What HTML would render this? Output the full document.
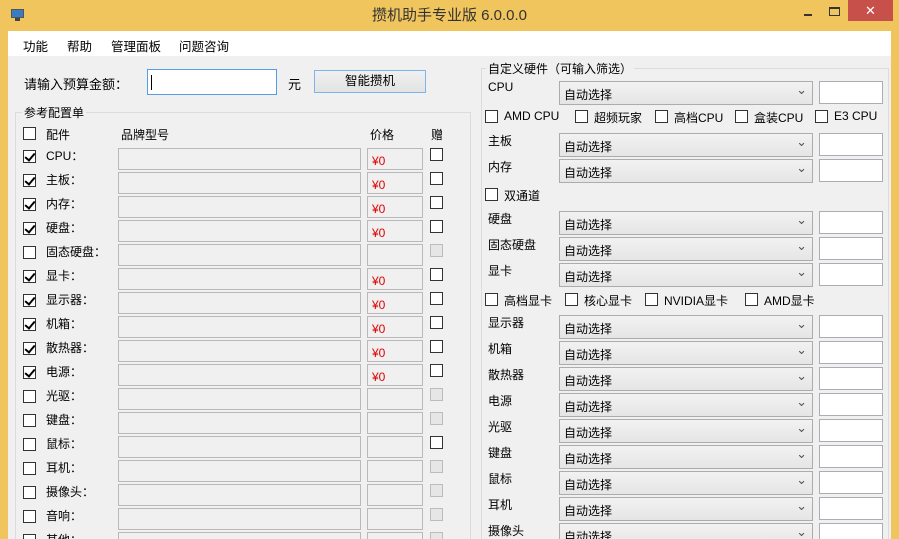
<!DOCTYPE html>
<html><head><meta charset="utf-8"><style>
*{box-sizing:border-box;margin:0;padding:0}
html,body{width:899px;height:539px;overflow:hidden}
body{background:#f0c55e;font-family:"Liberation Sans","Noto Sans CJK SC",sans-serif;font-size:12px;color:#000;position:relative}
.a{position:absolute}
.client{left:8px;top:31px;width:883px;height:508px;background:#f0f0f0}
.menu{left:8px;top:31px;width:883px;height:25px;background:#fff}
.cb{position:absolute;width:13px;height:13px;border:1px solid #333;background:#fff}
.cb.c::after{content:"";position:absolute;left:3px;top:0px;width:4px;height:8px;border:solid #000;border-width:0 2px 2px 0;transform:rotate(40deg)}
.cb.d{border-color:#bcbcbc;background:#e6e6e6}
.tb{position:absolute;border:1px solid #b9b9b9;background:#f0f0f0;height:22px}
.pr{color:#e00000;font-size:12px;padding:5px 0 0 4px}
.cmb{position:absolute;left:559px;width:254px;height:24px;border:1px solid #acacac;background:linear-gradient(#f2f2f2,#e5e5e5);padding:4px 0 0 4px}
.cmb::after{content:"⌄";position:absolute;right:5px;top:0px;font-size:13px;color:#555}
.sb{position:absolute;left:819px;width:64px;height:23px;border:1px solid #abadb3;background:#fff}
.lb{position:absolute}
.clip{position:absolute;left:0;top:0;width:899px;height:539px;overflow:hidden}
</style></head><body><div class="clip">
<div class="a" style="left:11px;top:9px;width:13px;height:9px;background:#3a7cc4;border:1px solid #555"></div>
<div class="a" style="left:15px;top:18px;width:5px;height:3px;background:#444"></div>
<div class="a" style="left:0;top:4px;width:899px;text-align:center;font-size:15px;color:#333">攒机助手专业版 6.0.0.0</div>
<div class="a" style="left:804px;top:14px;width:8px;height:2px;background:#333"></div>
<div class="a" style="left:829px;top:7px;width:11px;height:9px;border:1px solid #333;border-top-width:2px"></div>
<div class="a" style="left:848px;top:0;width:45px;height:21px;background:#c7504b;color:#fff;text-align:center;font-size:13px;line-height:21px">✕</div>
<div class="a client"></div>
<div class="a menu"></div>
<div class="a" style="left:23px;top:36px;font-size:12.5px">功能</div>
<div class="a" style="left:67px;top:36px;font-size:12.5px">帮助</div>
<div class="a" style="left:111px;top:36px;font-size:12.5px">管理面板</div>
<div class="a" style="left:179px;top:36px;font-size:12.5px">问题咨询</div>

<div class="a" style="left:24px;top:74px;font-size:13px">请输入预算金额：</div>
<div class="a" style="left:147px;top:69px;width:130px;height:26px;border:1px solid #569de5;background:#fff"><div class="a" style="left:3px;top:5px;width:1px;height:15px;background:#000"></div></div>
<div class="a" style="left:288px;top:74px;font-size:13px">元</div>
<div class="a" style="left:314px;top:70px;width:112px;height:23px;border:1px solid #7eb4ea;background:linear-gradient(#f0f0f0,#e3e3e3);text-align:center;line-height:21px;font-size:12.5px">智能攒机</div>

<div class="a" style="left:15px;top:112px;width:456px;height:440px;border:1px solid #dcdcdc"></div>
<div class="a" style="left:22px;top:104px;background:#f0f0f0;padding:0 2px">参考配置单</div>
<div class="cb" style="left:23px;top:127px"></div>
<div class="lb" style="left:46px;top:126px">配件</div>
<div class="lb" style="left:121px;top:126px">品牌型号</div>
<div class="lb" style="left:370px;top:126px">价格</div>
<div class="lb" style="left:431px;top:126px">赠</div>

<div class="cb c" style="left:23px;top:150px"></div><div class="lb" style="left:46px;top:147px">CPU：</div><div class="tb" style="left:118px;top:148px;width:243px"></div><div class="tb pr" style="left:367px;top:148px;width:56px">¥0</div><div class="cb" style="left:430px;top:148px"></div>
<div class="cb c" style="left:23px;top:174px"></div><div class="lb" style="left:46px;top:171px">主板：</div><div class="tb" style="left:118px;top:172px;width:243px"></div><div class="tb pr" style="left:367px;top:172px;width:56px">¥0</div><div class="cb" style="left:430px;top:172px"></div>
<div class="cb c" style="left:23px;top:198px"></div><div class="lb" style="left:46px;top:195px">内存：</div><div class="tb" style="left:118px;top:196px;width:243px"></div><div class="tb pr" style="left:367px;top:196px;width:56px">¥0</div><div class="cb" style="left:430px;top:196px"></div>
<div class="cb c" style="left:23px;top:222px"></div><div class="lb" style="left:46px;top:219px">硬盘：</div><div class="tb" style="left:118px;top:220px;width:243px"></div><div class="tb pr" style="left:367px;top:220px;width:56px">¥0</div><div class="cb" style="left:430px;top:220px"></div>
<div class="cb" style="left:23px;top:246px"></div><div class="lb" style="left:46px;top:243px">固态硬盘：</div><div class="tb" style="left:118px;top:244px;width:243px"></div><div class="tb" style="left:367px;top:244px;width:56px"></div><div class="cb d" style="left:430px;top:244px"></div>
<div class="cb c" style="left:23px;top:270px"></div><div class="lb" style="left:46px;top:267px">显卡：</div><div class="tb" style="left:118px;top:268px;width:243px"></div><div class="tb pr" style="left:367px;top:268px;width:56px">¥0</div><div class="cb" style="left:430px;top:268px"></div>
<div class="cb c" style="left:23px;top:294px"></div><div class="lb" style="left:46px;top:291px">显示器：</div><div class="tb" style="left:118px;top:292px;width:243px"></div><div class="tb pr" style="left:367px;top:292px;width:56px">¥0</div><div class="cb" style="left:430px;top:292px"></div>
<div class="cb c" style="left:23px;top:318px"></div><div class="lb" style="left:46px;top:315px">机箱：</div><div class="tb" style="left:118px;top:316px;width:243px"></div><div class="tb pr" style="left:367px;top:316px;width:56px">¥0</div><div class="cb" style="left:430px;top:316px"></div>
<div class="cb c" style="left:23px;top:342px"></div><div class="lb" style="left:46px;top:339px">散热器：</div><div class="tb" style="left:118px;top:340px;width:243px"></div><div class="tb pr" style="left:367px;top:340px;width:56px">¥0</div><div class="cb" style="left:430px;top:340px"></div>
<div class="cb c" style="left:23px;top:366px"></div><div class="lb" style="left:46px;top:363px">电源：</div><div class="tb" style="left:118px;top:364px;width:243px"></div><div class="tb pr" style="left:367px;top:364px;width:56px">¥0</div><div class="cb" style="left:430px;top:364px"></div>
<div class="cb" style="left:23px;top:390px"></div><div class="lb" style="left:46px;top:387px">光驱：</div><div class="tb" style="left:118px;top:388px;width:243px"></div><div class="tb" style="left:367px;top:388px;width:56px"></div><div class="cb d" style="left:430px;top:388px"></div>
<div class="cb" style="left:23px;top:414px"></div><div class="lb" style="left:46px;top:411px">键盘：</div><div class="tb" style="left:118px;top:412px;width:243px"></div><div class="tb" style="left:367px;top:412px;width:56px"></div><div class="cb d" style="left:430px;top:412px"></div>
<div class="cb" style="left:23px;top:438px"></div><div class="lb" style="left:46px;top:435px">鼠标：</div><div class="tb" style="left:118px;top:436px;width:243px"></div><div class="tb" style="left:367px;top:436px;width:56px"></div><div class="cb" style="left:430px;top:436px"></div>
<div class="cb" style="left:23px;top:462px"></div><div class="lb" style="left:46px;top:459px">耳机：</div><div class="tb" style="left:118px;top:460px;width:243px"></div><div class="tb" style="left:367px;top:460px;width:56px"></div><div class="cb d" style="left:430px;top:460px"></div>
<div class="cb" style="left:23px;top:486px"></div><div class="lb" style="left:46px;top:483px">摄像头：</div><div class="tb" style="left:118px;top:484px;width:243px"></div><div class="tb" style="left:367px;top:484px;width:56px"></div><div class="cb d" style="left:430px;top:484px"></div>
<div class="cb" style="left:23px;top:510px"></div><div class="lb" style="left:46px;top:507px">音响：</div><div class="tb" style="left:118px;top:508px;width:243px"></div><div class="tb" style="left:367px;top:508px;width:56px"></div><div class="cb d" style="left:430px;top:508px"></div>
<div class="cb" style="left:23px;top:534px"></div><div class="lb" style="left:46px;top:531px">其他：</div><div class="tb" style="left:118px;top:532px;width:243px"></div><div class="tb" style="left:367px;top:532px;width:56px"></div><div class="cb d" style="left:430px;top:532px"></div>

<div class="a" style="left:481px;top:68px;width:408px;height:490px;border:1px solid #dcdcdc"></div>
<div class="a" style="left:486px;top:60px;background:#f0f0f0;padding:0 2px">自定义硬件（可输入筛选）</div>

<div class="lb" style="left:488px;top:80px">CPU</div><div class="cmb" style="top:81px">自动选择</div><div class="sb" style="top:81px"></div>
<div class="cb" style="left:485px;top:110px"></div><div class="lb" style="left:504px;top:109px">AMD CPU</div>
<div class="cb" style="left:575px;top:110px"></div><div class="lb" style="left:594px;top:109px">超频玩家</div>
<div class="cb" style="left:655px;top:110px"></div><div class="lb" style="left:674px;top:109px">高档CPU</div>
<div class="cb" style="left:735px;top:110px"></div><div class="lb" style="left:754px;top:109px">盒装CPU</div>
<div class="cb" style="left:815px;top:110px"></div><div class="lb" style="left:834px;top:109px">E3 CPU</div>
<div class="lb" style="left:488px;top:132px">主板</div><div class="cmb" style="top:133px">自动选择</div><div class="sb" style="top:133px"></div>
<div class="lb" style="left:488px;top:158px">内存</div><div class="cmb" style="top:159px">自动选择</div><div class="sb" style="top:159px"></div>
<div class="cb" style="left:485px;top:188px"></div><div class="lb" style="left:504px;top:187px">双通道</div>
<div class="lb" style="left:488px;top:210px">硬盘</div><div class="cmb" style="top:211px">自动选择</div><div class="sb" style="top:211px"></div>
<div class="lb" style="left:488px;top:236px">固态硬盘</div><div class="cmb" style="top:237px">自动选择</div><div class="sb" style="top:237px"></div>
<div class="lb" style="left:488px;top:262px">显卡</div><div class="cmb" style="top:263px">自动选择</div><div class="sb" style="top:263px"></div>
<div class="cb" style="left:485px;top:293px"></div><div class="lb" style="left:504px;top:292px">高档显卡</div>
<div class="cb" style="left:565px;top:293px"></div><div class="lb" style="left:584px;top:292px">核心显卡</div>
<div class="cb" style="left:645px;top:293px"></div><div class="lb" style="left:664px;top:292px">NVIDIA显卡</div>
<div class="cb" style="left:745px;top:293px"></div><div class="lb" style="left:764px;top:292px">AMD显卡</div>
<div class="lb" style="left:488px;top:314px">显示器</div><div class="cmb" style="top:315px">自动选择</div><div class="sb" style="top:315px"></div>
<div class="lb" style="left:488px;top:340px">机箱</div><div class="cmb" style="top:341px">自动选择</div><div class="sb" style="top:341px"></div>
<div class="lb" style="left:488px;top:366px">散热器</div><div class="cmb" style="top:367px">自动选择</div><div class="sb" style="top:367px"></div>
<div class="lb" style="left:488px;top:392px">电源</div><div class="cmb" style="top:393px">自动选择</div><div class="sb" style="top:393px"></div>
<div class="lb" style="left:488px;top:418px">光驱</div><div class="cmb" style="top:419px">自动选择</div><div class="sb" style="top:419px"></div>
<div class="lb" style="left:488px;top:444px">键盘</div><div class="cmb" style="top:445px">自动选择</div><div class="sb" style="top:445px"></div>
<div class="lb" style="left:488px;top:470px">鼠标</div><div class="cmb" style="top:471px">自动选择</div><div class="sb" style="top:471px"></div>
<div class="lb" style="left:488px;top:496px">耳机</div><div class="cmb" style="top:497px">自动选择</div><div class="sb" style="top:497px"></div>
<div class="lb" style="left:488px;top:522px">摄像头</div><div class="cmb" style="top:523px">自动选择</div><div class="sb" style="top:523px"></div>
</div></body></html>
